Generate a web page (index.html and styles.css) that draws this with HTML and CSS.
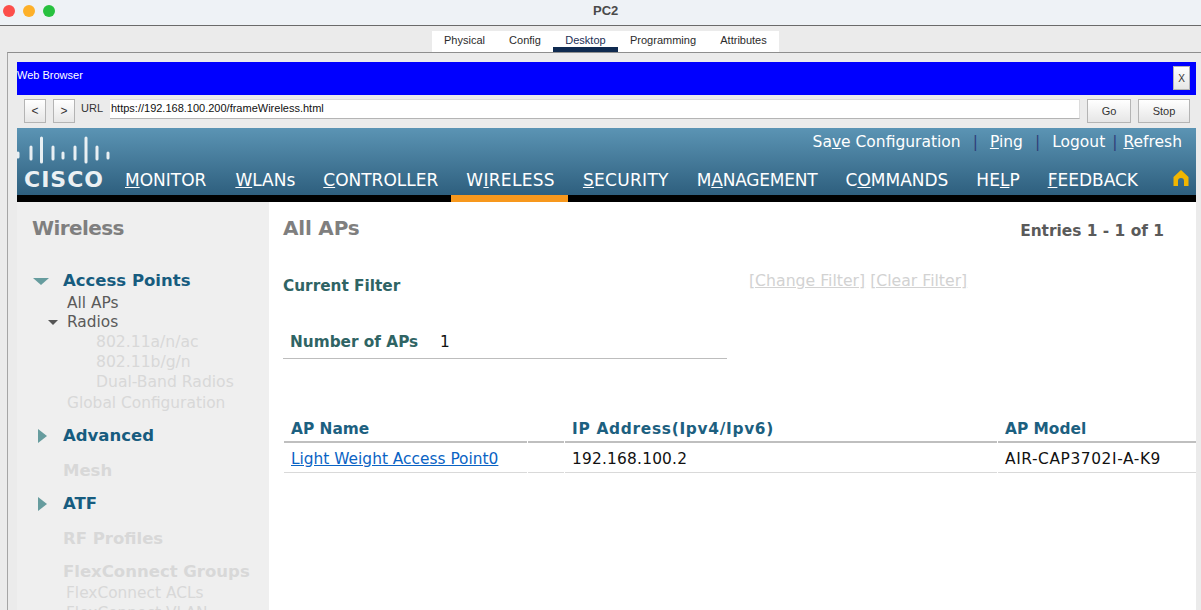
FILE: index.html
```html
<!DOCTYPE html>
<html>
<head>
<meta charset="utf-8"/>
<title>PC2</title>
<link rel="stylesheet" href="styles.css">
</head>
<body>

<div class="titlebar">
  <div class="lights">
    <span class="light red"></span>
    <span class="light amber"></span>
    <span class="light green"></span>
  </div>
  <div class="title">PC2</div>
</div>

<div class="tabstrip">
  <div class="tabs">
    <span class="tab tab-physical">Physical</span>
    <span class="tab tab-config">Config</span>
    <span class="tab tab-desktop">Desktop</span>
    <span class="tab tab-programming">Programming</span>
    <span class="tab tab-attributes">Attributes</span>
  </div>
</div>

<div class="desktop">
  <div class="browser">
    <div class="bluebar">
      <span class="bluebar-title">Web Browser</span>
      <span class="btn btn-close">X</span>
    </div>
    <div class="urlrow">
      <span class="btn btn-nav">&lt;</span>
      <span class="btn btn-nav">&gt;</span>
      <span class="url-label">URL</span>
      <div class="url-input">https://192.168.100.200/frameWireless.html</div>
      <span class="btn btn-go">Go</span>
      <span class="btn btn-stop">Stop</span>
    </div>

    <div class="wlc-header">
      <div class="logo">
        <svg class="logo-bars" width="96" height="30" viewBox="0 0 96 30">
          <g stroke="#fff" stroke-width="3" stroke-linecap="round" opacity="0.88">
            <line x1="1" y1="18" x2="1" y2="22"/>
            <line x1="14" y1="12" x2="14" y2="24"/>
            <line x1="24.5" y1="3" x2="24.5" y2="27"/>
            <line x1="36" y1="12" x2="36" y2="24"/>
            <line x1="46" y1="18" x2="46" y2="23"/>
            <line x1="58" y1="12" x2="58" y2="24"/>
            <line x1="69" y1="3" x2="69" y2="27"/>
            <line x1="80" y1="12" x2="80" y2="24"/>
            <line x1="91" y1="18" x2="91" y2="23"/>
          </g>
        </svg>
        <div class="logo-word">CISCO</div>
      </div>
      <div class="header-main">
        <div class="toplinks">
          <span>Sa<u>v</u>e Configuration</span><i>|</i>
          <span><u>P</u>ing</span><i>|</i>
          <span>Logout</span><i class="tight">|</i>
          <span><u>R</u>efresh</span>
        </div>
        <div class="mainnav">
          <span class="nav-item nav-first"><u>M</u>ONITOR</span>
          <span class="nav-item"><u>W</u>LANs</span>
          <span class="nav-item"><u>C</u>ONTROLLER</span>
          <span class="nav-item nav-wide">W<u>I</u>RELESS</span>
          <span class="nav-item nav-wide"><u>S</u>ECURITY</span>
          <span class="nav-item nav-tight">M<u>A</u>NAGEMENT</span>
          <span class="nav-item">C<u>O</u>MMANDS</span>
          <span class="nav-item">HE<u>L</u>P</span>
          <span class="nav-item"><u>F</u>EEDBACK</span>
          <svg class="home" width="16" height="16" viewBox="0 0 16 16">
            <path d="M8 0 L15.5 7 V16 H11 V11 A3 3 0 0 0 5 11 V16 H.5 V7 Z" fill="#f2b600"/>
          </svg>
          <span class="nav-home"><u>H</u>ome</span>
        </div>
      </div>
    </div>
    <div class="blackbar"><div class="active-mark"></div></div>

    <div class="wlc-body">
      <div class="sidebar">
        <div class="side-title">Wireless</div>

        <div class="side-head side-head-first"><span class="tri-down"></span>Access Points</div>
        <div class="side-sub side-allaps">All APs</div>
        <div class="side-sub side-radios"><span class="tri-small"></span>Radios</div>
        <div class="side-sub2">802.11a/n/ac</div>
        <div class="side-sub2">802.11b/g/n</div>
        <div class="side-sub2">Dual-Band Radios</div>
        <div class="side-sub off">Global Configuration</div>

        <div class="side-head side-advanced"><span class="tri-right"></span>Advanced</div>
        <div class="side-head off side-mesh">Mesh</div>
        <div class="side-head side-atf"><span class="tri-right"></span>ATF</div>
        <div class="side-head off side-rf">RF Profiles</div>
        <div class="side-head off side-flex">FlexConnect Groups</div>
        <div class="side-flexsub">FlexConnect ACLs</div>
        <div class="side-flexsub">FlexConnect VLAN</div>
      </div>

      <div class="content">
        <div class="content-top">
          <h1>All APs</h1>
          <span class="entries">Entries 1 - 1 of 1</span>
        </div>
        <div class="filter-row">
          <span class="filter-label">Current Filter</span>
          <span class="filter-links"><u>[Change Filter]</u> <u>[Clear Filter]</u></span>
        </div>
        <div class="count-row">
          <span class="count-label">Number of APs</span>
          <span class="count-val">1</span>
        </div>
        <table class="ap-table">
          <tr>
            <th class="col-name">AP Name</th>
            <th class="col-gap"></th>
            <th class="col-ip">IP Address(Ipv4/Ipv6)</th>
            <th class="col-model">AP Model</th>
          </tr>
          <tr>
            <td><a href="#">Light Weight Access Point0</a></td>
            <td></td>
            <td class="cell-ip">192.168.100.2</td>
            <td class="cell-model">AIR-CAP3702I-A-K9</td>
          </tr>
        </table>
      </div>
    </div>
  </div>
</div>

</body>
</html>
```

FILE: styles.css
```css
html, body {
  height: 610px;
  overflow: hidden;
}

body {
  margin: 0;
  background-color: #ebebeb;
  font-family: "DejaVu Sans", Verdana, sans-serif;
  display: flex;
  flex-direction: column;
}

.titlebar {
  height: 25px;
  flex: none;
  background-color: #eef2f6;
  border-bottom: 1px solid #6a6a6a;
  display: flex;
  align-items: flex-start;
  position: relative;
}

.lights {
  display: flex;
  gap: 8px;
  padding: 5px 0 0 3px;
}

.light {
  width: 12px;
  height: 12px;
  border-radius: 50%;
}

.red { background-color: #fc4f4b; }
.amber { background-color: #fdb029; }
.green { background-color: #27c13f; }

.title {
  position: absolute;
  left: 593px;
  top: 3px;
  font: bold 13px "Liberation Sans", Arial, sans-serif;
  color: #4a4a4a;
}

.tabstrip {
  height: 26px;
  flex: none;
  display: flex;
  justify-content: center;
  align-items: flex-end;
  padding-left: 10px;
}

.tabs {
  height: 21px;
  background-color: #fff;
  display: flex;
  font: 11px "Liberation Sans", Arial, sans-serif;
  color: #2b2b2b;
  width: 347px;
}

.tab {
  text-align: center;
  line-height: 19px;
}

.tab-physical { width: 65px; }
.tab-config { width: 56px; }
.tab-desktop {
  width: 65px;
  color: #1c2f55;
  border-bottom: 5px solid #0f2a50;
  height: 16px;
}
.tab-programming { width: 90px; }
.tab-attributes { width: 71px; }

.desktop {
  flex: 1;
  min-height: 0;
  margin-left: 7px;
  border-top: 1px solid #8e8e8e;
  border-left: 1px solid #a5a5a5;
  padding: 9px 5px 0 9px;
}

.browser {
  height: 100%;
  display: flex;
  flex-direction: column;
}

.btn {
  box-sizing: border-box;
  border: 1px solid #b4b4b4;
  background: linear-gradient(#ffffff, #e6e6e6);
  font: 11px "Liberation Sans", Arial, sans-serif;
  color: #333;
  display: flex;
  align-items: center;
  justify-content: center;
  flex: none;
}

.bluebar {
  height: 33px;
  flex: none;
  background-color: #0000ff;
  color: #fff;
  display: flex;
  justify-content: space-between;
  align-items: flex-start;
  font: 11px "Liberation Sans", Arial, sans-serif;
}

.bluebar-title {
  margin-top: 7px;
}

.btn-close {
  width: 17px;
  height: 24px;
  margin: 4px 6px 0 0;
  font-size: 10px;
}

.urlrow {
  height: 33px;
  flex: none;
  display: flex;
  align-items: flex-start;
  padding: 4px 6px 0 7px;
  box-sizing: border-box;
}

.btn-nav {
  width: 22px;
  height: 24px;
  margin-right: 7px;
  font-size: 12px;
}

.url-label {
  font: 11px "Liberation Sans", Arial, sans-serif;
  color: #333;
  margin: 3px 0 0 -1px;
  width: 29px;
}

.url-input {
  flex: 1;
  height: 20px;
  box-sizing: border-box;
  background-color: #fff;
  border-top: 1px solid #dcdcdc;
  border-bottom: 1px solid #b4b4b4;
  border-right: 1px solid #dcdcdc;
  padding: 2px 0 0 1px;
  font: 11px "Liberation Sans", Arial, sans-serif;
  color: #111;
  margin-right: 7px;
}

.btn-go {
  width: 44px;
  height: 24px;
  margin-right: 7px;
}

.btn-stop {
  width: 52px;
  height: 24px;
}

.wlc-header {
  height: 67px;
  flex: none;
  background: linear-gradient(#5b94b4, #2e5f7e);
  display: flex;
  color: #fff;
}

.logo {
  width: 108px;
  flex: none;
  padding-top: 7px;
  overflow: hidden;
}

.logo-bars {
  display: block;
}

.logo-word {
  font: bold 22px "DejaVu Sans", Verdana, sans-serif;
  letter-spacing: 1px;
  padding-left: 7px;
  margin-top: 3px;
  line-height: 24px;
  opacity: 0.9;
}

.header-main {
  flex: 1;
  min-width: 0;
  display: flex;
  flex-direction: column;
}

.toplinks {
  height: 37px;
  box-sizing: border-box;
  padding: 5px 14px 0 0;
  display: flex;
  justify-content: flex-end;
  font-size: 15.5px;
  line-height: 18px;
}

.toplinks i {
  font-style: normal;
  color: #2f3f7a;
  margin: 0 12px;
}

.toplinks i.tight {
  margin: 0 6px 0 7px;
}

.mainnav {
  display: flex;
  font-size: 17px;
  line-height: 20px;
  height: 30px;
  white-space: nowrap;
  overflow: hidden;
}

.nav-item {
  padding: 5px 14px 0;
  flex: none;
}

.nav-first {
  padding-left: 0;
  padding-right: 15px;
}

.nav-wide { letter-spacing: 0.3px; }
.nav-tight { letter-spacing: -0.2px; }

.home {
  margin: 5px 0 0 21px;
  flex: none;
}

.nav-home {
  padding: 5px 0 0 7px;
  flex: none;
}

.blackbar {
  height: 7px;
  flex: none;
  background-color: #000;
}

.active-mark {
  width: 117px;
  height: 7px;
  margin-left: 434px;
  background-color: #f7981d;
}

.wlc-body {
  flex: 1;
  min-height: 0;
  display: flex;
  background-color: #fff;
  overflow: hidden;
}

.sidebar {
  width: 252px;
  flex: none;
  background-color: #efefef;
  padding: 13px 0 0 15px;
  box-sizing: border-box;
  overflow: hidden;
  white-space: nowrap;
}

.side-title {
  font-size: 20px;
  font-weight: bold;
  color: #7f7f7f;
  line-height: 26px;
  letter-spacing: -0.6px;
}

.side-head {
  font-size: 16.5px;
  font-weight: bold;
  color: #175c7f;
  line-height: 22px;
  padding-left: 31px;
  position: relative;
}

.side-head-first { margin-top: 29px; }
.side-advanced { margin-top: 12px; }
.side-mesh { margin-top: 13px; }
.side-atf { margin-top: 11px; }
.side-rf { margin-top: 13px; }
.side-flex { margin-top: 11px; }

.side-head.off { color: #d8d8d8; }

.tri-down {
  position: absolute;
  left: 1px;
  top: 8px;
  border-left: 8px solid transparent;
  border-right: 8px solid transparent;
  border-top: 7px solid #669c9e;
}

.tri-right {
  position: absolute;
  left: 6px;
  top: 4px;
  border-top: 7px solid transparent;
  border-bottom: 7px solid transparent;
  border-left: 9px solid #669c9e;
}

.side-sub {
  font-size: 15.4px;
  color: #5a5a5a;
  line-height: 20px;
  padding-left: 35px;
  position: relative;
}

.side-allaps { margin-top: 1px; }
.side-radios { margin-top: -1px; }

.side-sub.off {
  color: #d8d8d8;
  margin-top: 1px;
}

.tri-small {
  position: absolute;
  left: 16px;
  top: 8px;
  border-left: 5px solid transparent;
  border-right: 5px solid transparent;
  border-top: 5px solid #555;
}

.side-sub2 {
  font-size: 15.6px;
  color: #d8d8d8;
  line-height: 20px;
  padding-left: 64px;
}

.side-flexsub {
  font-size: 15.4px;
  color: #d8d8d8;
  line-height: 20px;
  padding-left: 34px;
}

.content {
  flex: 1;
  min-width: 0;
  padding: 0 0 0 14px;
}

.content-top {
  display: flex;
  justify-content: space-between;
  padding: 13px 32px 0 0;
  height: 50px;
  box-sizing: border-box;
}

h1 {
  margin: 0;
  font-size: 20px;
  font-weight: bold;
  color: #7f7f7f;
  line-height: 26px;
  letter-spacing: -0.2px;
}

.entries {
  font-size: 15.4px;
  font-weight: bold;
  color: #5a5a5a;
  line-height: 32px;
}

.filter-row {
  height: 60px;
  display: flex;
  align-items: flex-start;
  padding-top: 18px;
  box-sizing: border-box;
}

.filter-label {
  font-size: 15.3px;
  font-weight: bold;
  color: #2f6464;
  width: 466px;
  line-height: 30px;
  margin-top: 1px;
}

.filter-links {
  font-size: 15.7px;
  color: #d2d2d2;
  line-height: 20px;
  margin-top: 1px;
}

.count-row {
  width: 444px;
  height: 47px;
  box-sizing: border-box;
  border-bottom: 1px solid #bdbdbd;
  font-size: 15.3px;
  line-height: 18px;
  padding: 21px 0 0 7px;
  display: flex;
}

.count-label {
  font-weight: bold;
  color: #2f6464;
  width: 150px;
}

.count-val {
  color: #111;
}

.ap-table {
  margin-top: 56px;
  width: calc(100% + 1px);
  border-collapse: separate;
  border-spacing: 1px 0;
  font-size: 15.4px;
  table-layout: fixed;
}

.ap-table th {
  text-align: left;
  color: #1c6080;
  font-weight: bold;
  height: 24px;
  padding: 2px 0 0 7px;
  border-bottom: 2px solid #bfbfbf;
}

.ap-table td {
  height: 27px;
  padding: 2px 0 0 7px;
  color: #111;
  border-bottom: 1px solid #d9d9d9;
}

.ap-table a {
  color: #0a63c4;
}

.col-name { width: 236px; }
.col-gap { width: 29px; }
.col-ip {
  width: 425px;
  letter-spacing: 0.7px;
}

.cell-ip { letter-spacing: 0.2px; }
.cell-model { letter-spacing: 0.6px; }
```
